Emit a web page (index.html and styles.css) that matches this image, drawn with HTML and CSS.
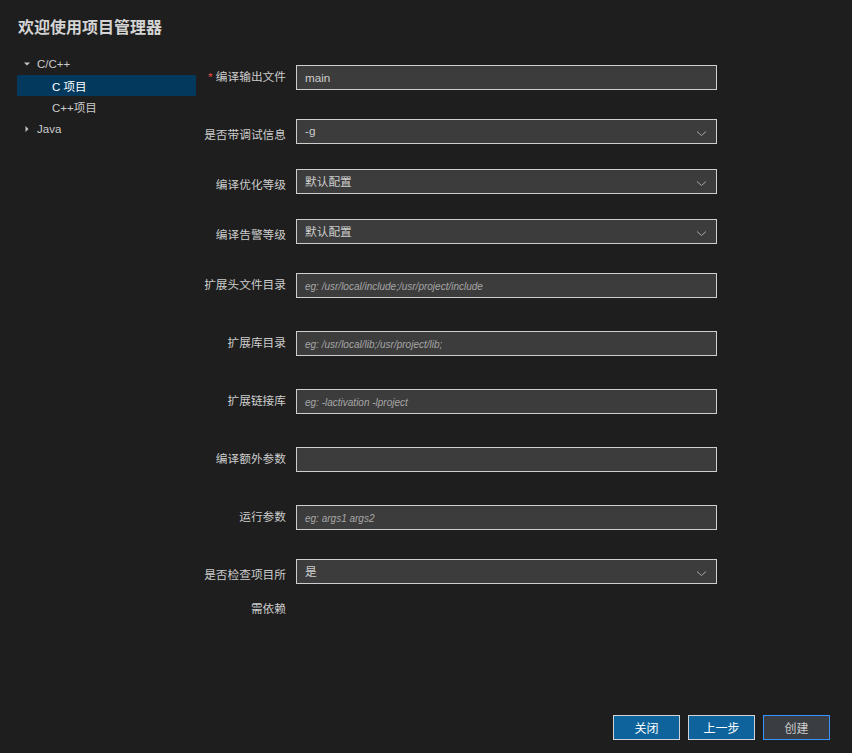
FILE: index.html
```html
<!DOCTYPE html>
<html lang="zh-CN">
<head>
<meta charset="utf-8">
<title>项目管理器</title>
<link rel="stylesheet" href="styles.css">
</head>
<body>
<div class="page">
  <h1 class="title">欢迎使用项目管理器</h1>
  <div class="content">
    <div class="sidebar">
      <div class="tree-row level0">
        <span class="twisty"><svg width="8" height="8" viewBox="0 0 8 8"><polygon points="1,2.5 7,2.5 4,5.5" fill="#c5c5c5"/></svg></span>
        <span class="tree-label">C/C++</span>
      </div>
      <div class="tree-row level1 selected"><span class="tree-label">C 项目</span></div>
      <div class="tree-row level1"><span class="tree-label">C++项目</span></div>
      <div class="tree-row level0">
        <span class="twisty"><svg width="8" height="8" viewBox="0 0 8 8"><polygon points="2.5,1 5.5,4 2.5,7" fill="#c5c5c5"/></svg></span>
        <span class="tree-label">Java</span>
      </div>
    </div>
    <div class="form">
      <div class="row text-row">
        <label class="label"><span class="req">*</span> 编译输出文件</label>
        <div class="field"><span class="value">main</span></div>
      </div>
      <div class="row select-row">
        <label class="label">是否带调试信息</label>
        <div class="field select"><span class="value">-g</span><svg class="chev" width="11" height="7" viewBox="0 0 11 7"><polyline points="1,1.5 5.5,5.5 10,1.5" fill="none" stroke="#a8a8a8" stroke-width="1"/></svg></div>
      </div>
      <div class="row select-row">
        <label class="label">编译优化等级</label>
        <div class="field select"><span class="value">默认配置</span><svg class="chev" width="11" height="7" viewBox="0 0 11 7"><polyline points="1,1.5 5.5,5.5 10,1.5" fill="none" stroke="#a8a8a8" stroke-width="1"/></svg></div>
      </div>
      <div class="row select-row">
        <label class="label">编译告警等级</label>
        <div class="field select"><span class="value">默认配置</span><svg class="chev" width="11" height="7" viewBox="0 0 11 7"><polyline points="1,1.5 5.5,5.5 10,1.5" fill="none" stroke="#a8a8a8" stroke-width="1"/></svg></div>
      </div>
      <div class="row text-row">
        <label class="label">扩展头文件目录</label>
        <div class="field"><span class="placeholder">eg: /usr/local/include;/usr/project/include</span></div>
      </div>
      <div class="row text-row">
        <label class="label">扩展库目录</label>
        <div class="field"><span class="placeholder">eg: /usr/local/lib;/usr/project/lib;</span></div>
      </div>
      <div class="row text-row">
        <label class="label">扩展链接库</label>
        <div class="field"><span class="placeholder">eg: -lactivation -lproject</span></div>
      </div>
      <div class="row text-row">
        <label class="label">编译额外参数</label>
        <div class="field"></div>
      </div>
      <div class="row text-row">
        <label class="label">运行参数</label>
        <div class="field"><span class="placeholder">eg: args1 args2</span></div>
      </div>
      <div class="row select-row">
        <label class="label">是否检查项目所需依赖</label>
        <div class="field select"><span class="value">是</span><svg class="chev" width="11" height="7" viewBox="0 0 11 7"><polyline points="1,1.5 5.5,5.5 10,1.5" fill="none" stroke="#a8a8a8" stroke-width="1"/></svg></div>
      </div>
    </div>
  </div>
  <div class="footer">
    <button class="btn primary">关闭</button>
    <button class="btn primary">上一步</button>
    <button class="btn secondary">创建</button>
  </div>
</div>
</body>
</html>
```
FILE: styles.css
```css
html, body {
  margin: 0;
  padding: 0;
  background: #1e1e1e;
  color: #cccccc;
  font-family: "Liberation Sans", "Noto Sans CJK SC", sans-serif;
  font-size: 12px;
}
.page {
  height: 753px;
  box-sizing: border-box;
  padding: 0 22px 13px 17px;
  display: flex;
  flex-direction: column;
}
.title {
  margin: 18px 0 0 1px;
  height: 20px;
  line-height: 20px;
  font-size: 16px;
  font-weight: bold;
  color: #d4d4d4;
}
.content {
  margin-top: 10px;
  display: flex;
  flex: 1;
}
.sidebar {
  width: 179px;
  padding-top: 5px;
  flex-shrink: 0;
}
.tree-row {
  height: 21.7px;
  display: flex;
  align-items: center;
  color: #cccccc;
  font-size: 11.5px;
}
.tree-row.level0 { padding-left: 6px; }
.tree-row.level1 { padding-left: 35px; }
.twisty {
  width: 8px;
  height: 8px;
  margin-right: 6px;
  display: flex;
}
.tree-row.selected {
  background: #04395e;
  color: #ffffff;
}
.form {
  display: flex;
  flex-direction: column;
}
.row {
  display: flex;
  align-items: flex-start;
  height: 25px;
}
.text-row { margin: 16.5px 0; }
.select-row { margin: 12.5px 0; }
.label {
  width: 90px;
  margin-right: 10px;
  text-align: right;
  line-height: 34px;
  font-size: 11.7px;
  color: #cccccc;
}
.text-row .label { margin-top: -4.5px; }
.select-row .label { margin-top: -0.5px; }
.req { color: #f14c4c; }
.field {
  width: 421px;
  height: 25px;
  box-sizing: border-box;
  background: #3c3c3c;
  border: 1px solid #cecece;
  padding: 0 8px;
  display: flex;
  align-items: center;
}
.value {
  color: #cccccc;
  font-size: 11.7px;
}
.placeholder {
  color: #a6a6a6;
  font-size: 10px;
  font-style: italic;
  padding-top: 3px;
}
.select {
  justify-content: space-between;
  padding-right: 9px;
}
.select .value { margin-top: -1px; }
.chev { margin-top: 5px; }
.footer {
  display: flex;
  justify-content: flex-end;
  gap: 8px;
}
.btn {
  width: 67px;
  height: 25px;
  box-sizing: border-box;
  font-family: "Liberation Sans", "Noto Sans CJK SC", sans-serif;
  font-size: 12px;
  padding: 0;
  cursor: pointer;
}
.btn.primary {
  background: #0e639c;
  border: 1px solid #d0d4d8;
  color: #ffffff;
}
.btn.secondary {
  background: #3a3d41;
  border: 1px solid #3794ff;
  color: #cccccc;
}
```
